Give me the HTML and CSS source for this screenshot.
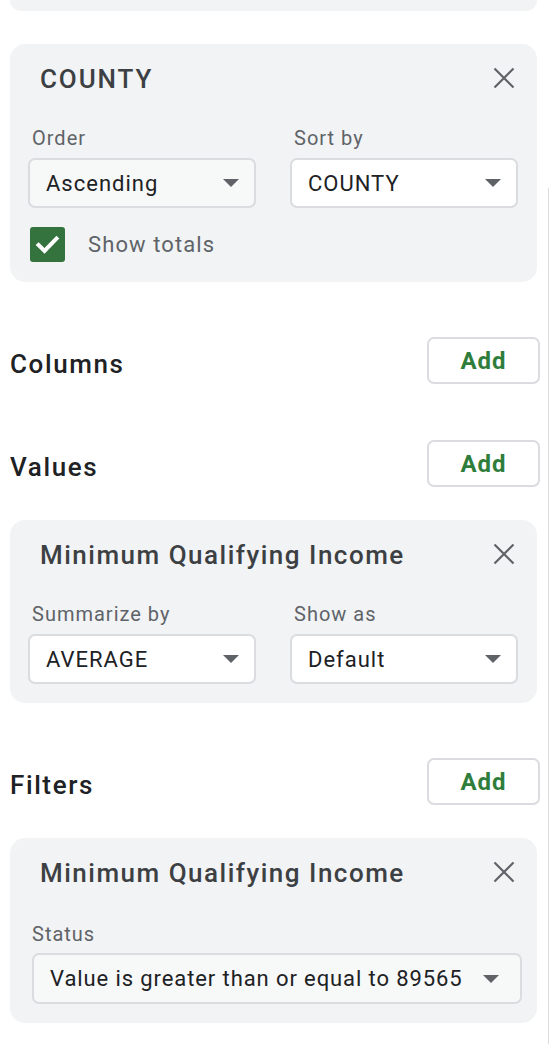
FILE: index.html
```html
<!DOCTYPE html>
<html>
<head>
<meta charset="utf-8">
<link rel="stylesheet" href="styles.css">
</head>
<body>
<div class="panel">
  <div class="card stub"></div>

  <div class="card county">
    <div class="card-head">
      <span class="card-title">COUNTY</span>
      <svg class="close" width="22" height="22" viewBox="0 0 22 22"><path d="M1.5 1.5L20.5 20.5M20.5 1.5L1.5 20.5" stroke="#5f6368" stroke-width="2.2" fill="none"/></svg>
    </div>
    <div class="fields">
      <div class="field">
        <div class="label">Order</div>
        <div class="select grey"><span>Ascending</span><i class="arrow"></i></div>
      </div>
      <div class="field">
        <div class="label">Sort by</div>
        <div class="select"><span>COUNTY</span><i class="arrow"></i></div>
      </div>
    </div>
    <div class="check-row">
      <span class="checkbox"><svg width="35" height="35" viewBox="0 0 35 35"><path d="M8.5 18L14.5 24L26.5 11.5" stroke="#fff" stroke-width="4" fill="none" stroke-linecap="square"/></svg></span>
      <span class="check-label">Show totals</span>
    </div>
  </div>

  <div class="section-row first">
    <h2 class="section-title">Columns</h2>
    <button class="add">Add</button>
  </div>

  <div class="section-row">
    <h2 class="section-title">Values</h2>
    <button class="add">Add</button>
  </div>

  <div class="card value">
    <div class="card-head">
      <span class="card-title">Minimum Qualifying Income</span>
      <svg class="close" width="22" height="22" viewBox="0 0 22 22"><path d="M1.5 1.5L20.5 20.5M20.5 1.5L1.5 20.5" stroke="#5f6368" stroke-width="2.2" fill="none"/></svg>
    </div>
    <div class="fields">
      <div class="field">
        <div class="label">Summarize by</div>
        <div class="select"><span>AVERAGE</span><i class="arrow"></i></div>
      </div>
      <div class="field">
        <div class="label">Show as</div>
        <div class="select"><span>Default</span><i class="arrow"></i></div>
      </div>
    </div>
  </div>

  <div class="section-row filters">
    <h2 class="section-title">Filters</h2>
    <button class="add">Add</button>
  </div>

  <div class="card filter">
    <div class="card-head">
      <span class="card-title">Minimum Qualifying Income</span>
      <svg class="close" width="22" height="22" viewBox="0 0 22 22"><path d="M1.5 1.5L20.5 20.5M20.5 1.5L1.5 20.5" stroke="#5f6368" stroke-width="2.2" fill="none"/></svg>
    </div>
    <div class="field status">
      <div class="label">Status</div>
      <div class="select grey wide"><span>Value is greater than or equal to 89565</span><i class="arrow"></i></div>
    </div>
  </div>
</div>
<div class="scroll-edge"></div>
</body>
</html>
```

FILE: styles.css
```css
html, body {
  margin: 0;
  padding: 0;
  background: #ffffff;
}

body {
  font-family: Roboto, "Liberation Sans", Arial, sans-serif;
  color: #202124;
}

.panel {
  padding-left: 10px;
  width: 530px;
  display: flex;
  flex-direction: column;
}

.card {
  width: 527px;
  box-sizing: border-box;
  background: #f1f3f4;
  border-radius: 15px;
  padding: 17px 19px 19px 18px;
}

.stub {
  height: 11px;
  padding: 0;
  border-radius: 0 0 14px 14px;
}

.county {
  margin-top: 33px;
  padding-bottom: 20px;
}

.card-head {
  height: 32px;
  display: flex;
  align-items: center;
  justify-content: space-between;
  padding-left: 12px;
  padding-right: 3px;
}

.filter .card-head {
  padding-right: 7px;
}

.card-title {
  font-size: 26px;
  font-weight: 500;
  color: #3c4043;
  letter-spacing: 1.5px;
  line-height: 32px;
  padding-top: 3px;
}

.county .card-title {
  letter-spacing: 1.9px;
}

.close {
  display: block;
  margin-top: 2px;
}

.fields {
  display: grid;
  grid-template-columns: 1fr 1fr;
  column-gap: 34px;
  margin-top: 33px;
}

.field {
  display: flex;
  flex-direction: column;
}

.label {
  font-size: 20px;
  line-height: 24px;
  color: #5f6368;
  padding-left: 4px;
  margin-bottom: 8px;
  letter-spacing: 1px;
}

.select {
  height: 50px;
  box-sizing: border-box;
  border: 2px solid #dadce0;
  border-radius: 7px;
  background: #ffffff;
  display: flex;
  align-items: center;
  justify-content: space-between;
  padding-left: 16px;
  padding-right: 15px;
  font-size: 22px;
  letter-spacing: 1px;
  color: #202124;
}

.select.grey {
  background: #f7f8f8;
}

.arrow {
  width: 0;
  height: 0;
  border-left: 8px solid transparent;
  border-right: 8px solid transparent;
  border-top: 8px solid #5f6368;
}

.check-row {
  display: flex;
  align-items: center;
  margin-top: 19px;
  padding-left: 2px;
  height: 35px;
}

.checkbox {
  width: 35px;
  height: 35px;
  background: #34733d;
  border-radius: 3px;
  display: block;
}

.checkbox svg {
  display: block;
}

.check-label {
  margin-left: 23px;
  font-size: 22px;
  letter-spacing: 1.1px;
  color: #5f6368;
}

.section-row {
  display: flex;
  align-items: center;
  justify-content: space-between;
  height: 47px;
  margin-top: 56px;
}

.section-row.first {
  margin-top: 55px;
}

.section-row.filters {
  margin-top: 55px;
}

.section-title {
  margin: 0;
  padding-top: 7px;
  font-size: 26px;
  font-weight: 500;
  color: #202124;
  letter-spacing: 1.6px;
}

.add {
  width: 113px;
  height: 47px;
  box-sizing: border-box;
  border: 2px solid #dadce0;
  border-radius: 7px;
  background: #ffffff;
  font-family: Roboto, "Liberation Sans", Arial, sans-serif;
  font-size: 24px;
  font-weight: 700;
  letter-spacing: 1px;
  color: #2f7d3b;
  padding: 0;
}

.value {
  margin-top: 33px;
}

.filter {
  margin-top: 33px;
  padding-right: 15px;
  padding-bottom: 19px;
}

.status {
  margin-top: 35px;
  padding-left: 4px;
  padding-right: 0;
}

.status .label {
  padding-left: 0;
  margin-bottom: 7px;
}

.select.wide {
  height: 51px;
  padding-right: 21px;
  letter-spacing: 0.9px;
}

.scroll-edge {
  position: absolute;
  left: 548px;
  top: 188px;
  height: 856px;
  width: 1px;
  background: #dadce0;
}
```
